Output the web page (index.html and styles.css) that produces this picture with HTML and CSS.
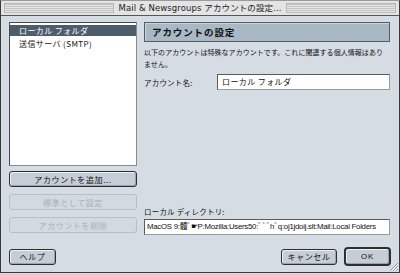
FILE: index.html
```html
<!DOCTYPE html>
<html lang="ja">
<head>
<meta charset="utf-8">
<title>Mail &amp; Newsgroups アカウントの設定</title>
<link rel="stylesheet" href="styles.css">
</head>
<body>
<div class="window">
  <div class="titlebar">
    <div class="stripes"></div>
    <div class="title">Mail &amp; Newsgroups アカウントの設定...</div>
    <div class="stripes"></div>
  </div>
  <div class="content">
    <div class="main">
      <div class="left">
        <ul class="list">
          <li class="selected">ローカル フォルダ</li>
          <li>送信サーバ (SMTP)</li>
        </ul>
        <button class="btn wide first">アカウントを追加...</button>
        <button class="btn wide disabled">標準として設定</button>
        <button class="btn wide disabled">アカウントを削除</button>
      </div>
      <div class="right">
        <div class="header">アカウントの設定</div>
        <p class="desc">以下のアカウントは特殊なアカウントです。これに関連する個人情報はあり<br>ません。</p>
        <div class="row">
          <span class="label">アカウント名:</span>
          <div class="field name">ローカル フォルダ</div>
        </div>
        <div class="spacer"></div>
        <div class="label dirlabel">ローカル ディレクトリ:</div>
        <div class="field path">MacOS 9:體ﾞ☛P:Mozilla:Users50:ﾞ`ﾞhﾞq:oj1jdoij.slt:Mail:Local Folders</div>
      </div>
    </div>
    <div class="footer">
      <button class="btn help">ヘルプ</button>
      <div class="grow"></div>
      <button class="btn cancel">キャンセル</button>
      <button class="btn ok">OK</button>
    </div>
  </div>
  <div class="grip">
    <svg width="10" height="10" viewBox="0 0 10 10"><path d="M2 10L10 2M5 10L10 5M8 10L10 8" stroke="#8a929c" stroke-width="1" fill="none"/><path d="M3 10L10 3M6 10L10 6M9 10L10 9" stroke="#ffffff" stroke-width="1" fill="none"/></svg>
  </div>
</div>
</body>
</html>
```
FILE: styles.css
```css
* { box-sizing: border-box; }
html, body { margin: 0; padding: 0; }
body {
  width: 400px;
  height: 274px;
  overflow: hidden;
  background: #d6dce4;
  font-family: "Noto Sans CJK JP", "Liberation Sans", sans-serif;
  font-size: 8px;
  color: #111;
}
.window {
  position: relative;
  width: 400px;
  height: 273px;
  border: 1px solid #3a3a3a;
  border-top: 1px solid #9a9a9a;
  background: #d6dce4;
  display: flex;
  flex-direction: column;
}
.titlebar {
  height: 15px;
  display: flex;
  align-items: center;
  padding: 0 3px;
  background: #e4e4e4;
  border-bottom: 1px solid #555;
}
.stripes {
  flex: 1;
  height: 10px;
  background: repeating-linear-gradient(to bottom, #c4c4c4 0, #c4c4c4 1px, #e8e8e8 1px, #e8e8e8 2px);
  border: 1px solid #b8b8b8;
}
.title {
  padding: 0 4px;
  font-family: "DejaVu Sans", "Noto Sans CJK JP", sans-serif;
  font-size: 8.5px;
  letter-spacing: 0.1px;
  color: #222;
  white-space: nowrap;
  line-height: 14px;
}
.content {
  flex: 1;
  display: flex;
  flex-direction: column;
  padding: 6px 8px 8px 8px;
}
.main {
  display: flex;
  gap: 7px;
}
.left {
  width: 129px;
  display: flex;
  flex-direction: column;
}
.list {
  margin: 0;
  padding: 2px 0 0 0;
  list-style: none;
  height: 144px;
  background: #fff;
  border: 1px solid #4a4a4a;
  border-right-color: #8a8a8a;
  border-bottom-color: #8a8a8a;
}
.list li {
  height: 11px;
  line-height: 11px;
  padding-left: 9px;
  margin-bottom: 1px;
  font-size: 8px;
  letter-spacing: 0.4px;
  white-space: nowrap;
}
.list li.selected {
  background: #4e5d6c;
  color: #fff;
  margin-bottom: 2px;
}
.btn {
  font-family: "Noto Sans CJK JP", "Liberation Sans", sans-serif;
  font-size: 8px;
  letter-spacing: 0.6px;
  height: 16px;
  padding: 0;
  line-height: 13px;
  border: 1px solid #2e2e2e;
  border-radius: 3px;
  background: #c5cdd6;
  box-shadow: inset 1px 1px 0 #eef1f4, inset -1px -1px 0 #9ba4ae;
  color: #111;
}
.btn.wide { width: 128px; margin-top: 7px; }
.btn.wide.first { margin-top: 5px; }
.btn.disabled {
  background: #d3d9e0;
  border-color: #b7bec7;
  color: #a8b0ba;
  box-shadow: none;
}
.right {
  flex: 1;
  display: flex;
  flex-direction: column;
  padding-right: 1px;
}
.header {
  height: 20px;
  line-height: 18px;
  padding-left: 7px;
  background: #a8b8c4;
  border: 1px solid #555d66;
  box-shadow: inset 1px 1px 0 #c8d4dc;
  font-weight: bold;
  font-size: 9.5px;
  letter-spacing: 0.9px;
}
.desc {
  margin: 4px 0 0 0;
  font-size: 7px;
  line-height: 12px;
  letter-spacing: 0.05px;
  white-space: nowrap;
}
.row {
  display: flex;
  align-items: center;
  margin-top: 4px;
}
.label {
  font-size: 7.5px;
  letter-spacing: 0.2px;
  width: 73px;
}
.field {
  height: 16px;
  line-height: 14px;
  background: #fff;
  border: 1px solid #5a5a5a;
  border-right-color: #9a9a9a;
  border-bottom-color: #9a9a9a;
  padding-left: 4px;
  white-space: nowrap;
  overflow: hidden;
}
.field.name {
  width: 173px;
  font-size: 8px;
  letter-spacing: 0.4px;
}
.spacer { height: 117px; }
.dirlabel { width: auto; line-height: 10px; }
.field.path {
  margin-top: 2px;
  width: 246px;
  font-family: "Liberation Sans Narrow", "Liberation Sans", "Noto Sans CJK JP", sans-serif;
  font-size: 7.8px;
  letter-spacing: -0.25px;
  padding-left: 2px;
}
.footer {
  display: flex;
  align-items: center;
  margin-top: 12px;
}
.grow { flex: 1; }
.btn.help { width: 47px; }
.btn.cancel { width: 56px; margin-right: 7px; }
.btn.ok {
  width: 47px;
  height: 19px;
  border-width: 2px;
  border-radius: 4px;
  font-family: "Liberation Sans", sans-serif;
}
.grip {
  position: absolute;
  right: 1px;
  bottom: 1px;
  width: 10px;
  height: 10px;
  line-height: 0;
}
```
